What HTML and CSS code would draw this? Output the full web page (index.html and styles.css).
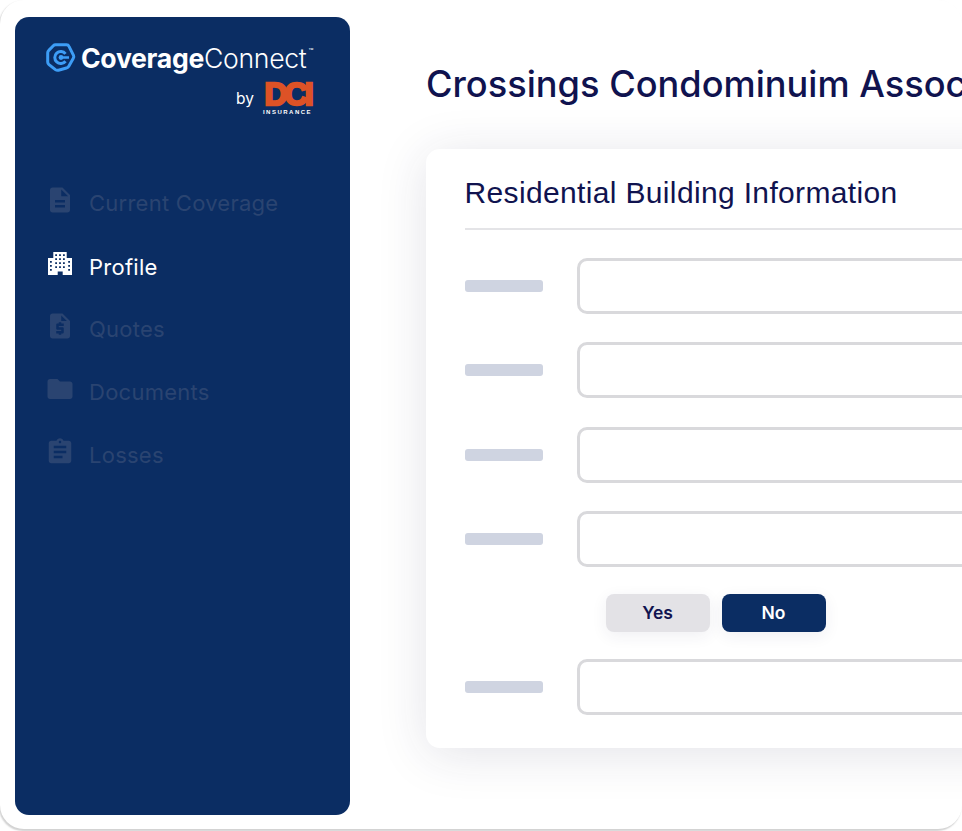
FILE: index.html
```html
<!DOCTYPE html>
<html lang="en">
<head>
<meta charset="utf-8">
<title>Crossings Condominuim Association</title>
<link rel="stylesheet" href="styles.css">
</head>
<body>
<div class="frame">
  <aside class="sidebar">
    <div class="brand">
      <div class="brand-main">
        <svg class="hex" viewBox="0 0 30 30" aria-hidden="true">
          <path class="hex-line" d="M9.500 1.800H20.500Q22.300 1.800 23 3.300L27.500 12.300Q28.200 13.800 27.300 15.300L22.800 23.200Q22 24.600 20.400 25L12.500 27.200Q10.800 27.600 9.400 26.600L3 21.600Q1.700 20.500 1.700 18.900V9.800Q1.700 8.300 2.800 7.300L7.300 2.700Q8.200 1.800 9.500 1.800Z"/>
          <path class="hex-c" d="M19.500 10.800A6 6 0 1 0 19.500 18.200"/>
          <path class="hex-bar" d="M15 14.500H23"/>
          <circle class="hex-dot" cx="15" cy="14.500" r="2.400"/>
        </svg>
        <span class="brand-name"><b>Coverage</b><span>Connect</span><sup>™</sup></span>
      </div>
      <div class="brand-by">
        <span class="by">by</span>
        <span class="dci"><span class="dci-mark">DCI</span><span class="dci-sub">INSURANCE</span></span>
      </div>
    </div>
    <nav class="nav">
      <a class="nav-item">
        <svg class="nav-icon" viewBox="0 0 24 24" aria-hidden="true"><path d="M14 2H6c-1.100 0-2 .9-2 2v16c0 1.100.9 2 2 2h12c1.100 0 2-.9 2-2V8l-6-6zm2 16H8v-2h8v2zm0-4H8v-2h8v2zm-3-5V3.500L18.500 9H13z"/></svg>
        <span>Current Coverage</span>
      </a>
      <a class="nav-item active">
        <svg class="nav-icon" viewBox="-3 -4 30 30" aria-hidden="true"><path fill-rule="evenodd" d="M5.300 0H18.700V6H24V23H14.700V19.500H9.700V23H0V6H5.300ZM7.200 2.300h1.800v1.800H7.200zM11.100 2.300h1.800v1.800h-1.800zM15 2.300h1.800v1.800H15zM7.200 6.300h1.800v1.800H7.200zM11.100 6.300h1.800v1.800h-1.800zM15 6.300h1.800v1.800H15zM7.200 10.300h1.800v1.800H7.200zM11.100 10.300h1.800v1.800h-1.800zM15 10.300h1.800v1.800H15zM7.200 14.300h1.800v1.800H7.200zM11.100 14.300h1.800v1.800h-1.800zM15 14.300h1.800v1.800H15zM2 9h1.800v1.800H2zM2 13h1.800v1.800H2zM2 17h1.800v1.800H2zM20.200 9H22v1.800h-1.800zM20.200 13H22v1.800h-1.800zM20.200 17H22v1.800h-1.800z"/></svg>
        <span>Profile</span>
      </a>
      <a class="nav-item">
        <svg class="nav-icon" viewBox="0 0 24 24" aria-hidden="true"><path d="M14 2H6c-1.100 0-1.990.9-1.990 2L4 20c0 1.100.89 2 1.990 2H18c1.100 0 2-.9 2-2V8l-6-6zm1 10h-4v1h3c.55 0 1 .45 1 1v3c0 .55-.45 1-1 1h-1v1h-2v-1H9v-2h4v-1h-3c-.55 0-1-.45-1-1v-3c0-.55.45-1 1-1h1V9h2v1h2v2zm-2-4V3.500L17.500 8H13z"/></svg>
        <span>Quotes</span>
      </a>
      <a class="nav-item">
        <svg class="nav-icon" viewBox="0 0 24 24" aria-hidden="true"><path d="M10 4H4c-1.100 0-1.990.9-1.990 2L2 18c0 1.100.9 2 2 2h16c1.100 0 2-.9 2-2V8c0-1.100-.9-2-2-2h-8l-2-2z"/></svg>
        <span>Documents</span>
      </a>
      <a class="nav-item">
        <svg class="nav-icon" viewBox="0 0 24 24" aria-hidden="true"><path d="M19 3h-4.180C14.400 1.840 13.300 1 12 1c-1.300 0-2.400.84-2.820 2H5c-1.100 0-2 .9-2 2v14c0 1.100.9 2 2 2h14c1.100 0 2-.9 2-2V5c0-1.100-.9-2-2-2zm-7 0c.55 0 1 .45 1 1s-.45 1-1 1-1-.45-1-1 .45-1 1-1zm2 14H7v-2h7v2zm3-4H7v-2h10v2zm0-4H7V7h10v2z"/></svg>
        <span>Losses</span>
      </a>
    </nav>
  </aside>
  <main class="main">
    <h1 class="title">Crossings Condominuim Association</h1>
    <section class="card">
      <h2 class="card-title">Residential Building Information</h2>
      <div class="form">
        <div class="row"><span class="label"></span><div class="input"></div></div>
        <div class="row"><span class="label"></span><div class="input"></div></div>
        <div class="row"><span class="label"></span><div class="input"></div></div>
        <div class="row"><span class="label"></span><div class="input"></div></div>
        <div class="choices">
          <button class="choice">Yes</button>
          <button class="choice on">No</button>
        </div>
        <div class="row"><span class="label"></span><div class="input"></div></div>
      </div>
    </section>
  </main>
</div>
</body>
</html>
```
FILE: styles.css
```css
* { box-sizing: border-box; }
html, body { margin: 0; padding: 0; background: #fff; }
body { width: 962px; height: 831px; overflow: hidden; font-family: "Inter", "Liberation Sans", sans-serif; }
.frame {
  width: 962px; height: 829px; background: #fff; border-radius: 24px;
  box-shadow: -1px 1.500px 1.500px rgba(0, 0, 0, 0.18);
  display: flex; overflow: hidden;
}
.sidebar {
  flex: none; width: 334.500px; height: 798px; margin: 17px 0 0 15px;
  background: #0b2d63; border-radius: 14px; display: flex; flex-direction: column;
}
.brand { height: 154.500px; padding: 26px 37.500px 0 31px; color: #fff; }
.brand-main { display: flex; align-items: center; gap: 5px; height: 30px; }
.hex { width: 30px; height: 30px; flex: none; }
.hex-line, .hex-c { fill: none; stroke: #3d9df6; stroke-width: 3; }
.hex-bar { stroke: #3d9df6; stroke-width: 2.500; }
.hex-dot { fill: #3d9df6; }
.brand-name { font-size: 26.600px; line-height: 30px; letter-spacing: -0.300px; white-space: nowrap; }
.brand-name b { font-weight: 700; }
.brand-name span { font-weight: 300; }
.brand-name sup { font-size: 8px; line-height: 0; vertical-align: 14px; font-weight: 400; letter-spacing: 0; margin-left: 2px; }
.brand-by { display: flex; justify-content: flex-end; align-items: flex-start; gap: 9px; margin-top: 9px; }
.by { font-size: 15.500px; line-height: 20px; margin-top: 7px; }
.dci { display: flex; flex-direction: column; align-items: center; width: 49px; }
.dci-mark { font-family: "Liberation Sans", sans-serif; font-weight: 700; font-size: 32px; line-height: 24px; height: 24px; letter-spacing: -3px; color: #dd5226; -webkit-text-stroke: 2.500px #dd5226; white-space: nowrap; }
.dci-sub { font-family: "Liberation Sans", sans-serif; font-size: 6px; font-weight: 700; letter-spacing: 1.500px; line-height: 8px; margin-top: 2px; white-space: nowrap; }
.nav { display: flex; flex-direction: column; }
.nav-item { height: 63px; display: flex; align-items: center; gap: 14px; padding-left: 30px; color: #2a4471; font-size: 22px; letter-spacing: 0.250px; }
.nav-item.active { color: #fff; }
.nav-item.active span { margin-top: 2px; }
.nav-icon { width: 30px; height: 30px; flex: none; fill: currentColor; margin-bottom: 7px; }
.main { flex: none; width: 612.500px; padding-left: 76.500px; }
.title { margin: 63px 0 0; font-size: 36.200px; line-height: 42px; font-weight: 500; color: #10134f; white-space: nowrap; width: 535px; }
.card {
  width: 800px; height: 599px; margin-top: 44px; background: #fff; border-radius: 14px; padding: 25px 39px 0 38.500px;
  box-shadow: 0 6px 50px rgba(40, 40, 80, 0.13);
}
.card-title { margin: 0; height: 56px; line-height: 38px; font-family: "Liberation Sans", sans-serif; font-size: 30px; letter-spacing: 0.350px; font-weight: 400; color: #10134f; border-bottom: 2px solid #e4e4e7; white-space: nowrap; }
.form { display: flex; flex-direction: column; gap: 28.330px; margin-top: 28px; }
.row { display: flex; align-items: center; gap: 34px; height: 56px; }
.label { width: 78.500px; height: 12px; border-radius: 3px; background: #cfd4e1; flex: none; }
.input { flex: 1; height: 56px; border: 3px solid #d9d9dc; border-radius: 10px; background: #fff; }
.choices { display: flex; gap: 12px; margin: -1.330px 0 -1.330px 141px; }
.choice { width: 104px; height: 38px; border: 0; border-radius: 8px; background: #e3e2e6; color: #10134f; font-family: "Inter", "Liberation Sans", sans-serif; font-size: 17.500px; font-weight: 600; box-shadow: 0 4px 16px rgba(40, 40, 80, 0.07); }
.choice.on { background: #0b2d63; color: #fff; }
```
